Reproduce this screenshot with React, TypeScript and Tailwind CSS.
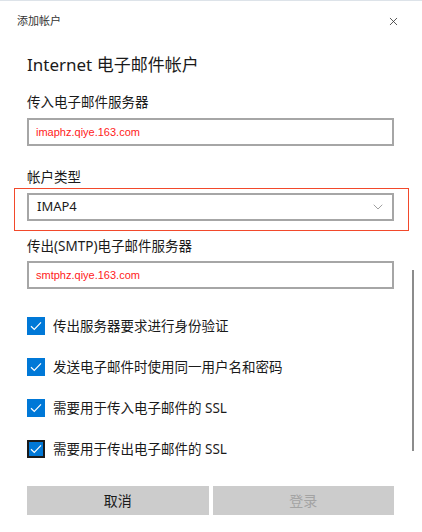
import { X, ChevronDown } from 'lucide-react';

const ui = "font-['Noto_Sans','Noto_Sans_CJK_SC',sans-serif]";

function Check({ focused }: { focused?: boolean }) {
  return (
    <div
      className={`w-[18px] h-[18px] shrink-0 bg-[#0078d7] flex items-center justify-center ${
        focused ? 'outline-2 outline-[#1a1a1a] -outline-offset-2' : ''
      }`}
    >
      <svg width="14" height="14" viewBox="0 0 14 14" fill="none">
        <path d="M2 7.2 L5.3 10.4 L12 3.4" stroke="white" strokeWidth="1.2" />
      </svg>
    </div>
  );
}

function TextBox({ value }: { value: string }) {
  return (
    <div className="h-[28px] border-2 border-[#a6a6a6] bg-white flex items-center pl-[7px]">
      <span className="text-[11px] text-[#ff1a1a] font-['Liberation_Sans',sans-serif]">{value}</span>
    </div>
  );
}

export default function App() {
  const options = [
    '传出服务器要求进行身份验证',
    '发送电子邮件时使用同一用户名和密码',
    '需要用于传入电子邮件的 SSL',
    '需要用于传出电子邮件的 SSL',
  ];

  return (
    <div className={`relative w-[422px] h-[532px] bg-white overflow-hidden border-t border-[#dde3e9] text-[#1a1a1a] ${ui}`}>
      {/* Header */}
      <div className="flex items-center justify-between h-[40px] pl-[17px] pr-[22px]">
        <span className="text-[11px] text-[#333]">添加帐户</span>
        <X className="w-[13px] h-[13px] text-[#333]" strokeWidth={1.5} />
      </div>

      {/* Scrollbar */}
      <div className="absolute left-[412px] top-[269px] w-[2px] h-[181px] bg-[#8c8c8c]" />

      <div className="flex flex-col pl-[27px] pr-[28px]">
        <h1 className="mt-[12px] text-[17px] leading-[24px]">Internet 电子邮件帐户</h1>

        <label className="mt-[15px] text-[13.5px] leading-[20px]">传入电子邮件服务器</label>
        <div className="mt-[6px]">
          <TextBox value="imaphz.qiye.163.com" />
        </div>

        <label className="mt-[21px] text-[13.5px] leading-[20px]">帐户类型</label>
        <div className="mt-[1px] -ml-[13px] -mr-[15px] border border-[#f2492b] pt-[4px] pb-[9px] pl-[12px] pr-[14px]">
          <div className="h-[28px] border-2 border-[#a6a6a6] flex items-center justify-between pl-[8px] pr-[6px]">
            <span className="text-[13px]">IMAP4</span>
            <ChevronDown className="w-[16px] h-[16px] text-[#888]" strokeWidth={1.2} />
          </div>
        </div>

        <label className="mt-[5px] text-[13.5px] leading-[20px]">传出(SMTP)电子邮件服务器</label>
        <div className="mt-[5px]">
          <TextBox value="smtphz.qiye.163.com" />
        </div>

        <div className="mt-[27px] flex flex-col gap-[21px]">
          {options.map((o, i) => (
            <div key={o} className="flex items-center h-[20px] gap-[8px]">
              <Check focused={i === 3} />
              <span className="text-[13.5px]">{o}</span>
            </div>
          ))}
        </div>

        <div className="mt-[27px] grid grid-cols-2 gap-[4px]">
          <button className="h-[29px] bg-[#cccccc] text-[14px] text-[#1a1a1a]">取消</button>
          <button className="h-[29px] bg-[#cccccc] text-[14px] text-[#a3a3a3]">登录</button>
        </div>
      </div>
    </div>
  );
}
